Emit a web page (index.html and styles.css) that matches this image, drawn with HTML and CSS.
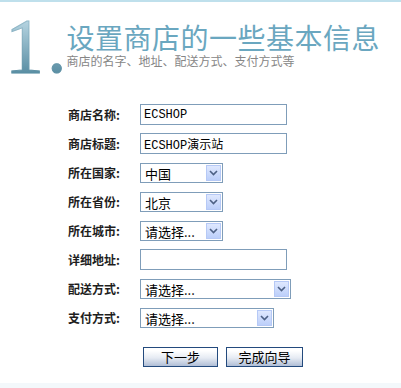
FILE: index.html
```html
<!DOCTYPE html>
<html lang="zh-CN">
<head>
    <meta charset="UTF-8">
    <title>ECSHOP 安装程序</title>
    <link rel="stylesheet" href="styles.css">
</head>
<body>
    <div class="page">
        <div class="header">
            <div class="step-num"><span class="digit">1</span><span class="dot">.</span></div>
            <div class="header-text">
                <h1>设置商店的一些基本信息</h1>
                <p>商店的名字、地址、配送方式、支付方式等</p>
            </div>
        </div>

        <div class="form">
            <div class="form-row">
                <label for="shopName">商店名称:</label>
                <input type="text" id="shopName" class="text-input" value="ECSHOP">
            </div>
            <div class="form-row">
                <label for="shopTitle">商店标题:</label>
                <input type="text" id="shopTitle" class="text-input" value="ECSHOP演示站">
            </div>
            <div class="form-row">
                <label for="country">所在国家:</label>
                <span class="select-box select-small">
                    <select id="country"><option>中国</option></select>
                    <span class="select-arrow"><svg width="9" height="6" viewBox="0 0 9 6"><path d="M1 1 L4.5 4.5 L8 1" fill="none" stroke="#4d6185" stroke-width="1.6"/></svg></span>
                </span>
            </div>
            <div class="form-row">
                <label for="province">所在省份:</label>
                <span class="select-box select-small">
                    <select id="province"><option>北京</option></select>
                    <span class="select-arrow"><svg width="9" height="6" viewBox="0 0 9 6"><path d="M1 1 L4.5 4.5 L8 1" fill="none" stroke="#4d6185" stroke-width="1.6"/></svg></span>
                </span>
            </div>
            <div class="form-row">
                <label for="city">所在城市:</label>
                <span class="select-box select-small">
                    <select id="city"><option>请选择...</option></select>
                    <span class="select-arrow"><svg width="9" height="6" viewBox="0 0 9 6"><path d="M1 1 L4.5 4.5 L8 1" fill="none" stroke="#4d6185" stroke-width="1.6"/></svg></span>
                </span>
            </div>
            <div class="form-row">
                <label for="address">详细地址:</label>
                <input type="text" id="address" class="text-input" value="">
            </div>
            <div class="form-row">
                <label for="shipping">配送方式:</label>
                <span class="select-box select-wide">
                    <select id="shipping"><option>请选择...</option></select>
                    <span class="select-arrow"><svg width="9" height="6" viewBox="0 0 9 6"><path d="M1 1 L4.5 4.5 L8 1" fill="none" stroke="#4d6185" stroke-width="1.6"/></svg></span>
                </span>
            </div>
            <div class="form-row">
                <label for="payment">支付方式:</label>
                <span class="select-box select-mid">
                    <select id="payment"><option>请选择...</option></select>
                    <span class="select-arrow"><svg width="9" height="6" viewBox="0 0 9 6"><path d="M1 1 L4.5 4.5 L8 1" fill="none" stroke="#4d6185" stroke-width="1.6"/></svg></span>
                </span>
            </div>

            <div class="button-row">
                <button type="button">下一步</button>
                <button type="button" class="btn-wide">完成向导</button>
            </div>
        </div>
    </div>
    <div class="footer-band"></div>
</body>
</html>
```

FILE: styles.css
```css
body {
    margin: 0;
    background-color: #fff;
    font-family: "Noto Sans CJK SC", "Noto Sans", sans-serif;
    font-size: 12px;
    color: #222;
}

.page {
    border-top: 2px solid #bfe0ec;
    height: 383px;
    box-sizing: border-box;
}

.header {
    display: flex;
    padding-top: 5px;
    padding-left: 5px;
}

.step-num {
    font-family: "Liberation Serif", serif;
    font-size: 78px;
    line-height: 77px;
    height: 77px;
    background: linear-gradient(#b3d2df 20%, #5b8fa4 85%);
    -webkit-background-clip: text;
    background-clip: text;
    color: transparent;
    -webkit-text-stroke: 1px rgba(91, 143, 164, 0.35);
}

.step-num .dot {
    margin-left: 3px;
}

.header-text {
    margin-left: 0;
}

.header-text h1 {
    margin: 15px 0 0 0;
    font-size: 28px;
    line-height: 30px;
    font-weight: normal;
    color: #6aa7c0;
    letter-spacing: 0.5px;
}

.header-text p {
    margin: 2px 0 0 0;
    font-size: 12px;
    line-height: 14px;
    color: #868686;
}

.form {
    padding-left: 68px;
    padding-top: 16px;
}

.form-row {
    display: flex;
    align-items: center;
    height: 29px;
}

.form-row label {
    width: 72px;
    font-weight: bold;
    font-size: 12px;
    color: #1e1e1e;
}

.text-input {
    width: 147px;
    height: 21px;
    box-sizing: border-box;
    border: 1px solid #7f9db9;
    padding: 0 3px;
    margin: 0;
    font-family: "Liberation Mono", "Noto Sans CJK SC", monospace;
    font-size: 12px;
    color: #000;
    outline: none;
}

.select-box {
    position: relative;
    display: inline-block;
    height: 20px;
}

.select-box select {
    -webkit-appearance: none;
    appearance: none;
    width: 100%;
    height: 20px;
    box-sizing: border-box;
    border: 1px solid #7f9db9;
    border-radius: 0;
    background: #fff;
    padding: 0 0 0 4px;
    margin: 0;
    font-family: "Noto Sans CJK SC", sans-serif;
    font-size: 13px;
    color: #000;
    outline: none;
}

.select-small { width: 83px; }
.select-mid { width: 134px; }
.select-wide { width: 151px; }

.select-arrow {
    position: absolute;
    top: 2px;
    right: 2px;
    width: 15px;
    height: 16px;
    box-sizing: border-box;
    border: 1px solid #b6c9f6;
    background: linear-gradient(#dfe8fe, #bccffa);
    display: flex;
    align-items: center;
    justify-content: center;
}

.button-row {
    display: flex;
    gap: 8px;
    padding-left: 75px;
    padding-top: 15px;
}

.button-row button {
    width: 75px;
    height: 20px;
    box-sizing: border-box;
    border: 1px solid #234a7d;
    background: linear-gradient(#ffffff 15%, #e6ebf3 55%, #b0bed6);
    font-family: "Noto Sans CJK SC", sans-serif;
    font-size: 13px;
    line-height: 16px;
    color: #000;
    padding: 0;
    cursor: pointer;
}

.button-row .btn-wide {
    width: 77px;
}

.footer-band {
    height: 5px;
    background-color: #f3f8fb;
}
```
